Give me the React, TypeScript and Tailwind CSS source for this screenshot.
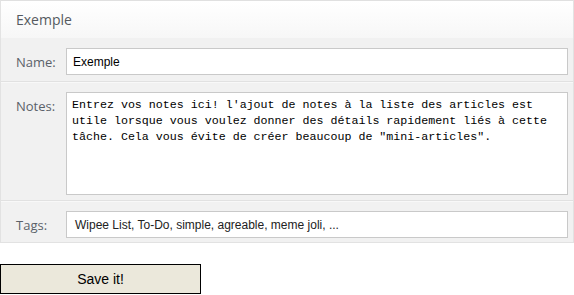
import React from "react";

export default function App() {
  const label = "w-[65px] shrink-0 pl-[15px] text-[13px] text-[#5b6169] font-['Open_Sans',sans-serif]";
  return (
    <div className="w-[574px] h-[295px] bg-white">
      <div className="border-l border-r border-b border-[#e2e2e2]">
        <div className="h-[38px] border-t border-[#e0e0e0] bg-gradient-to-b from-white to-[#f7f7f7] flex items-center pl-[15px] text-[14px] text-[#555a60] font-['Open_Sans',sans-serif] shadow-[0_1px_1px_#e6e6e6]">
          Exemple
        </div>
        <div className="h-[44px] bg-[#f1f1f1] flex items-start pt-[10px] border-b border-[#e1e1e1]">
          <div className={label + " leading-[26px] pt-[1px]"}>Name:</div>
          <div className="w-[502px] h-[27px] bg-white border border-[#c9c9c9] flex items-center px-[6px] text-[12px] text-black font-['Liberation_Sans',Arial,sans-serif]">
            Exemple
          </div>
        </div>
        <div className="h-[119px] bg-[#f1f1f1] flex items-start pt-[9px] border-t border-[#f8f8f8] border-b border-b-[#e1e1e1]">
          <div className={label + " leading-[26px] pt-[1px]"}>Notes:</div>
          <div className="w-[502px] h-[103px] bg-white border border-[#c9c9c9] px-[5px] pt-[4px] text-[11.65px] leading-[16px] text-black font-['Liberation_Mono','Courier_New',monospace]">
            Entrez vos notes ici! l'ajout de notes à la liste des articles est utile lorsque vous voulez donner des détails rapidement liés à cette tâche. Cela vous évite de créer beaucoup de "mini-articles".
          </div>
        </div>
        <div className="h-[41px] bg-[#f1f1f1] flex items-start pt-[9px] border-t border-[#f8f8f8]">
          <div className={label + " leading-[26px] pt-[1px]"}>Tags:</div>
          <div className="w-[502px] h-[27px] bg-white border border-[#c9c9c9] flex items-center px-[8px] text-[12px] text-[#222] font-['Liberation_Sans',Arial,sans-serif]">
            Wipee List, To-Do, simple, agreable, meme joli, ...
          </div>
        </div>
      </div>
      <div className="mt-[21px] w-[201px] h-[30px] bg-[#ebe8db] border border-black flex items-center justify-center text-[14px] text-black font-['Liberation_Sans',Arial,sans-serif]">
        Save it!
      </div>
    </div>
  );
}
